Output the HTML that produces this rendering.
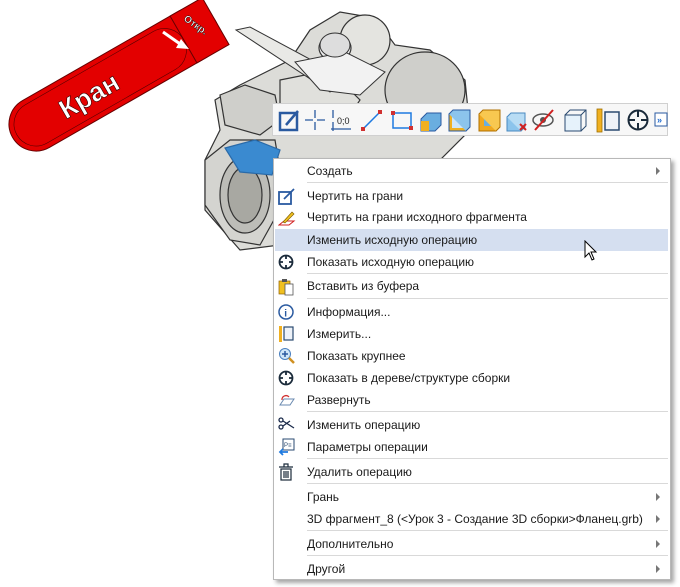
<!DOCTYPE html>
<html><head><meta charset="utf-8"><style>
body{margin:0;width:680px;height:587px;background:#fff;overflow:hidden;position:relative;font-family:"Liberation Sans","Noto Sans CJK SC",sans-serif;}
#art{position:absolute;left:0;top:0}
.tb{position:absolute;left:272px;top:103px;width:396px;height:33px;background:#f7f7f7;border:1px solid #d0d0d0;box-sizing:border-box}
.menu{position:absolute;left:273px;top:158px;width:398px;height:422px;background:#fff;border:1px solid #b8b8b8;box-shadow:3px 3px 4px rgba(0,0,0,.35);box-sizing:border-box}
.it{position:absolute;left:33px;font-size:12px;color:#1a1a1a;line-height:14px}
.sep{position:absolute;left:33px;right:2px;height:1px;background:#d9d9d9}
.hl{position:absolute;left:1px;right:2px;top:70px;height:22px;background:#d5dff0}
.ar{position:absolute;right:10px;width:0;height:0;border-left:4px solid #777;border-top:4px solid transparent;border-bottom:4px solid transparent}
.ic{position:absolute;left:4px}
</style></head><body>
<svg id="art" width="680" height="300">
<g stroke="#333" stroke-width="1.2" fill="#d9d9d5">
<path d="M215 100 L240 85 L290 60 L310 30 L340 12 L375 18 L395 45 L430 50 L465 80 L470 130 L440 160 L290 160 L280 245 L240 250 L205 210 L205 160 L220 130 Z" fill="#dcdcd8"/>
<ellipse cx="425" cy="90" rx="40" ry="38" fill="#cfcfcb"/>
<ellipse cx="365" cy="40" rx="25" ry="25" fill="#e4e4e0"/>
<ellipse cx="335" cy="48" rx="16" ry="13" fill="#eee"/>
<path d="M280 80 L330 70 L360 100 L340 130 L280 120 Z" fill="#e0e0dc"/>
<path d="M220 95 L245 85 L275 95 L280 120 L260 135 L225 125 Z" fill="#cfcfcb"/>
<path d="M205 160 L230 140 L275 140 L285 200 L260 245 L230 240 L205 205 Z" fill="#d4d4d0"/>
<ellipse cx="245" cy="195" rx="25" ry="38" fill="#bdbdb8"/>
<ellipse cx="245" cy="195" rx="17" ry="28" fill="#a8a8a2"/>
<path d="M225 148 L255 140 L280 150 L272 175 L240 172 Z" fill="#3a8ad0" stroke="#2a6aa8"/>
</g>
<path d="M236 30 L250 27 L345 78 L330 92 Z" fill="#e9e9e6" stroke="#333"/>
<path d="M295 62 L345 52 L385 72 L360 95 L320 90 Z" fill="#f2f2f2" stroke="#333"/>
<ellipse cx="335" cy="45" rx="15" ry="12" fill="#ddd" stroke="#333"/>
<g transform="translate(36,124) rotate(-29.8)">
<rect x="-27" y="-27" width="234" height="54" rx="27" fill="#e30000" stroke="#600" stroke-width="1"/>
<rect x="170" y="-27" width="37" height="54" fill="#e30000" stroke="#600"/>
<rect x="-22" y="-22" width="192" height="44" rx="22" fill="none" stroke="#500" stroke-width=".6"/>
<text x="28" y="11" font-size="27" font-weight="bold" fill="#fff" stroke="#300" stroke-width=".6" font-family="Liberation Sans,sans-serif">Кран</text>
</g>
<text x="0" y="0" transform="translate(183,20) rotate(35)" font-size="10" font-weight="bold" fill="#fff" stroke="#000" stroke-width=".4">Откр.</text>
<path d="M163 32 L183 46" stroke="#fff" stroke-width="3"/>
<path d="M181 39 L189 49 L176 48 Z" fill="#fff"/>
</svg>

<div class="tb">
<svg width="396" height="33" style="position:absolute;left:0;top:0">
<g transform="translate(6,6)"><rect x="1" y="3" width="17" height="17" fill="none" stroke="#2a5aa0" stroke-width="2.5"/><path d="M7 15 L19 1" stroke="#2a5aa0" stroke-width="2.5"/></g>
<g transform="translate(32,6)" stroke="#2a5aa0" stroke-width="1.3"><path d="M0 10 H8 M12 10 H20 M10 0 V8 M10 12 V20"/></g>
<g transform="translate(58,6)" stroke="#2a5aa0" stroke-width="1.3"><path d="M2 0 V8 M2 12 V21 M0 19 H20"/><text x="6" y="14" font-size="9" fill="#222" stroke="none">0;0</text></g>
<g transform="translate(88,6)"><path d="M2 19 L19 2" stroke="#1e7ae0" stroke-width="1.5"/><rect x="0" y="17" width="4" height="4" fill="#d03030"/><rect x="17" y="0" width="4" height="4" fill="#d03030"/></g>
<g transform="translate(118,6)"><rect x="2" y="3" width="18" height="15" fill="none" stroke="#1e7ae0" stroke-width="1.5"/><rect x="0" y="1" width="4" height="4" fill="#d03030"/><rect x="18" y="16" width="4" height="4" fill="#d03030"/></g>
<g transform="translate(146,5)"><path d="M2 10 L8 4 H22 V16 L16 22 H2 Z" fill="#6aaee0" stroke="#2a5aa0"/><path d="M2 12 H10 V22 H2 Z" fill="#f0b020"/></g>
<g transform="translate(174,5)"><rect x="2" y="5" width="17" height="17" fill="#f0b020" stroke="#2a5aa0"/><rect x="5" y="8" width="11" height="11" fill="#cfe6f8"/><path d="M2 5 L6 1 H23 V18 L19 22" fill="#8cc4ec" stroke="#2a5aa0"/></g>
<g transform="translate(204,5)"><rect x="2" y="5" width="17" height="17" fill="#f0a820" stroke="#b07000"/><rect x="7" y="10" width="8" height="7" fill="#6aaee0"/><path d="M2 5 L6 1 H23 V18 L19 22" fill="#f8c850" stroke="#b07000"/></g>
<g transform="translate(232,5)"><rect x="2" y="8" width="14" height="14" fill="#8cc4ec" stroke="#4a8ac0"/><path d="M2 8 L6 4 H20 V18 L16 22" fill="#b8dcf4" stroke="#4a8ac0"/><path d="M15 15 L21 21 M21 15 L15 21" stroke="#d02020" stroke-width="2"/></g>
<g transform="translate(260,6)"><ellipse cx="10" cy="10" rx="10" ry="6" fill="none" stroke="#555" stroke-width="1.5"/><circle cx="10" cy="10" r="3" fill="#555"/><path d="M2 20 L20 0" stroke="#d02020" stroke-width="2"/></g>
<g transform="translate(290,5)"><rect x="2" y="6" width="16" height="16" fill="#e6f2fb" stroke="#2a4a70"/><path d="M2 6 L7 1 H23 V17 L18 22 M18 6 L23 1" fill="none" stroke="#2a4a70"/></g>
<g transform="translate(324,5)"><rect x="0" y="0" width="5" height="23" fill="#f0b020" stroke="#a07000" stroke-width=".8"/><rect x="8" y="3" width="14" height="18" fill="#eef2f8" stroke="#2a4a70" stroke-width="1.5"/></g>
<g transform="translate(354,5)" stroke="#1a2a3a" stroke-width="2" fill="none"><circle cx="11" cy="11" r="9.5"/><path d="M11 1 V8 M11 14 V21 M1 11 H8 M14 11 H21"/></g>
<g transform="translate(382,9)"><rect x="0" y="0" width="12" height="13" fill="#fff" stroke="#2a5aa0"/><text x="2" y="10" font-size="9" font-weight="bold" fill="#1e6ad0">»</text></g>
</svg>
</div>

<div class="menu">
<div class="hl"></div>
<div class="it" style="top:5px">Создать</div><div class="ar" style="top:8px"></div>
<div class="sep" style="top:23px"></div>
<svg class="ic" style="top:29px" width="18" height="18"><rect x="1" y="4" width="12" height="12" fill="none" stroke="#2a5aa0" stroke-width="1.8"/><path d="M6 11 L16 1" stroke="#2a5aa0" stroke-width="1.8"/></svg>
<div class="it" style="top:30px">Чертить на грани</div>
<svg class="ic" style="top:50px" width="18" height="18"><path d="M1 16 L6 12 H16 L11 16 Z" fill="none" stroke="#d02020"/><path d="M5 13 L14 3 L16 5 L7 14 Z" fill="#f0c020" stroke="#806000" stroke-width=".7"/></svg>
<div class="it" style="top:51px">Чертить на грани исходного фрагмента</div>
<div class="it" style="top:74px">Изменить исходную операцию</div>
<svg class="ic" style="top:94px" width="18" height="18" fill="none" stroke="#1a2a3a" stroke-width="1.8"><circle cx="8" cy="9" r="6.5"/><path d="M8 2 V6 M8 12 V16 M1 9 H5 M11 9 H15"/></svg>
<div class="it" style="top:96px">Показать исходную операцию</div>
<div class="sep" style="top:114px"></div>
<svg class="ic" style="top:119px" width="18" height="18"><rect x="1" y="3" width="11" height="13" fill="#f0c020" stroke="#906000" stroke-width=".7"/><rect x="7" y="6" width="8" height="11" fill="#fff" stroke="#555" stroke-width=".8"/><rect x="4" y="1" width="5" height="3" fill="#555"/></svg>
<div class="it" style="top:120px">Вставить из буфера</div>
<div class="sep" style="top:139px"></div>
<svg class="ic" style="top:144px" width="18" height="18"><circle cx="8" cy="9" r="7" fill="#fff" stroke="#2a5aa0" stroke-width="1.5"/><text x="6.3" y="13.5" font-size="10" font-weight="bold" fill="#2a5aa0">i</text></svg>
<div class="it" style="top:146px">Информация...</div>
<svg class="ic" style="top:166px" width="18" height="18"><rect x="1" y="1" width="3" height="16" fill="#f0b020"/><rect x="6" y="2" width="9" height="13" fill="#eef2f8" stroke="#2a4a70" stroke-width="1.2"/></svg>
<div class="it" style="top:168px">Измерить...</div>
<svg class="ic" style="top:188px" width="18" height="18"><circle cx="7" cy="7" r="5.5" fill="#cfe6f8" stroke="#4a80c0"/><path d="M4 7 H10 M7 4 V10" stroke="#2a5aa0" stroke-width="1.5"/><path d="M11 11 L16 16" stroke="#d09020" stroke-width="2.5"/></svg>
<div class="it" style="top:190px">Показать крупнее</div>
<svg class="ic" style="top:210px" width="18" height="18" fill="none" stroke="#1a2a3a" stroke-width="1.8"><circle cx="8" cy="9" r="6.5"/><path d="M8 2 V6 M8 12 V16 M1 9 H5 M11 9 H15"/></svg>
<div class="it" style="top:212px">Показать в дереве/структуре сборки</div>
<svg class="ic" style="top:232px" width="18" height="18"><path d="M2 14 L6 8 H16 L12 14 Z" fill="none" stroke="#6a8ab0"/><path d="M4 9 A4 4 0 0 1 11 6" fill="none" stroke="#d03030" stroke-width="1.3"/></svg>
<div class="it" style="top:234px">Развернуть</div>
<div class="sep" style="top:252px"></div>
<svg class="ic" style="top:257px" width="18" height="18" stroke="#1a2a4a" stroke-width="1.3" fill="none"><circle cx="3" cy="4" r="2"/><circle cx="3" cy="11" r="2"/><path d="M5 5 L16 12 M5 10 L12 5"/></svg>
<div class="it" style="top:259px">Изменить операцию</div>
<svg class="ic" style="top:279px" width="18" height="18"><rect x="5" y="1" width="11" height="11" fill="#fff" stroke="#2a4a70"/><text x="6" y="9" font-size="6" fill="#2a4a70">P≡</text><path d="M10 14 H2 M5 11 L2 14 L5 17" stroke="#1e7ae0" stroke-width="1.8" fill="none"/></svg>
<div class="it" style="top:281px">Параметры операции</div>
<div class="sep" style="top:299px"></div>
<svg class="ic" style="top:304px" width="18" height="18" fill="none" stroke="#1a2a3a" stroke-width="1.2"><path d="M1 4 H15 M6 4 V1 H10 V4"/><rect x="3" y="6" width="10" height="11"/><path d="M6 8 V15 M8 8 V15 M10 8 V15"/></svg>
<div class="it" style="top:306px">Удалить операцию</div>
<div class="sep" style="top:324px"></div>
<div class="it" style="top:331px">Грань</div><div class="ar" style="top:334px"></div>
<div class="it" style="top:353px">3D фрагмент_8 (&lt;Урок 3 - Создание 3D сборки&gt;Фланец.grb)</div><div class="ar" style="top:356px"></div>
<div class="sep" style="top:371px"></div>
<div class="it" style="top:378px">Дополнительно</div><div class="ar" style="top:381px"></div>
<div class="sep" style="top:396px"></div>
<div class="it" style="top:403px">Другой</div><div class="ar" style="top:406px"></div>
</div>
<svg style="position:absolute;left:584px;top:240px" width="14" height="22"><path d="M1 1 V17 L5 13 L8 20 L10 19 L7 12 H12 Z" fill="#fff" stroke="#000"/></svg>
</body></html>
